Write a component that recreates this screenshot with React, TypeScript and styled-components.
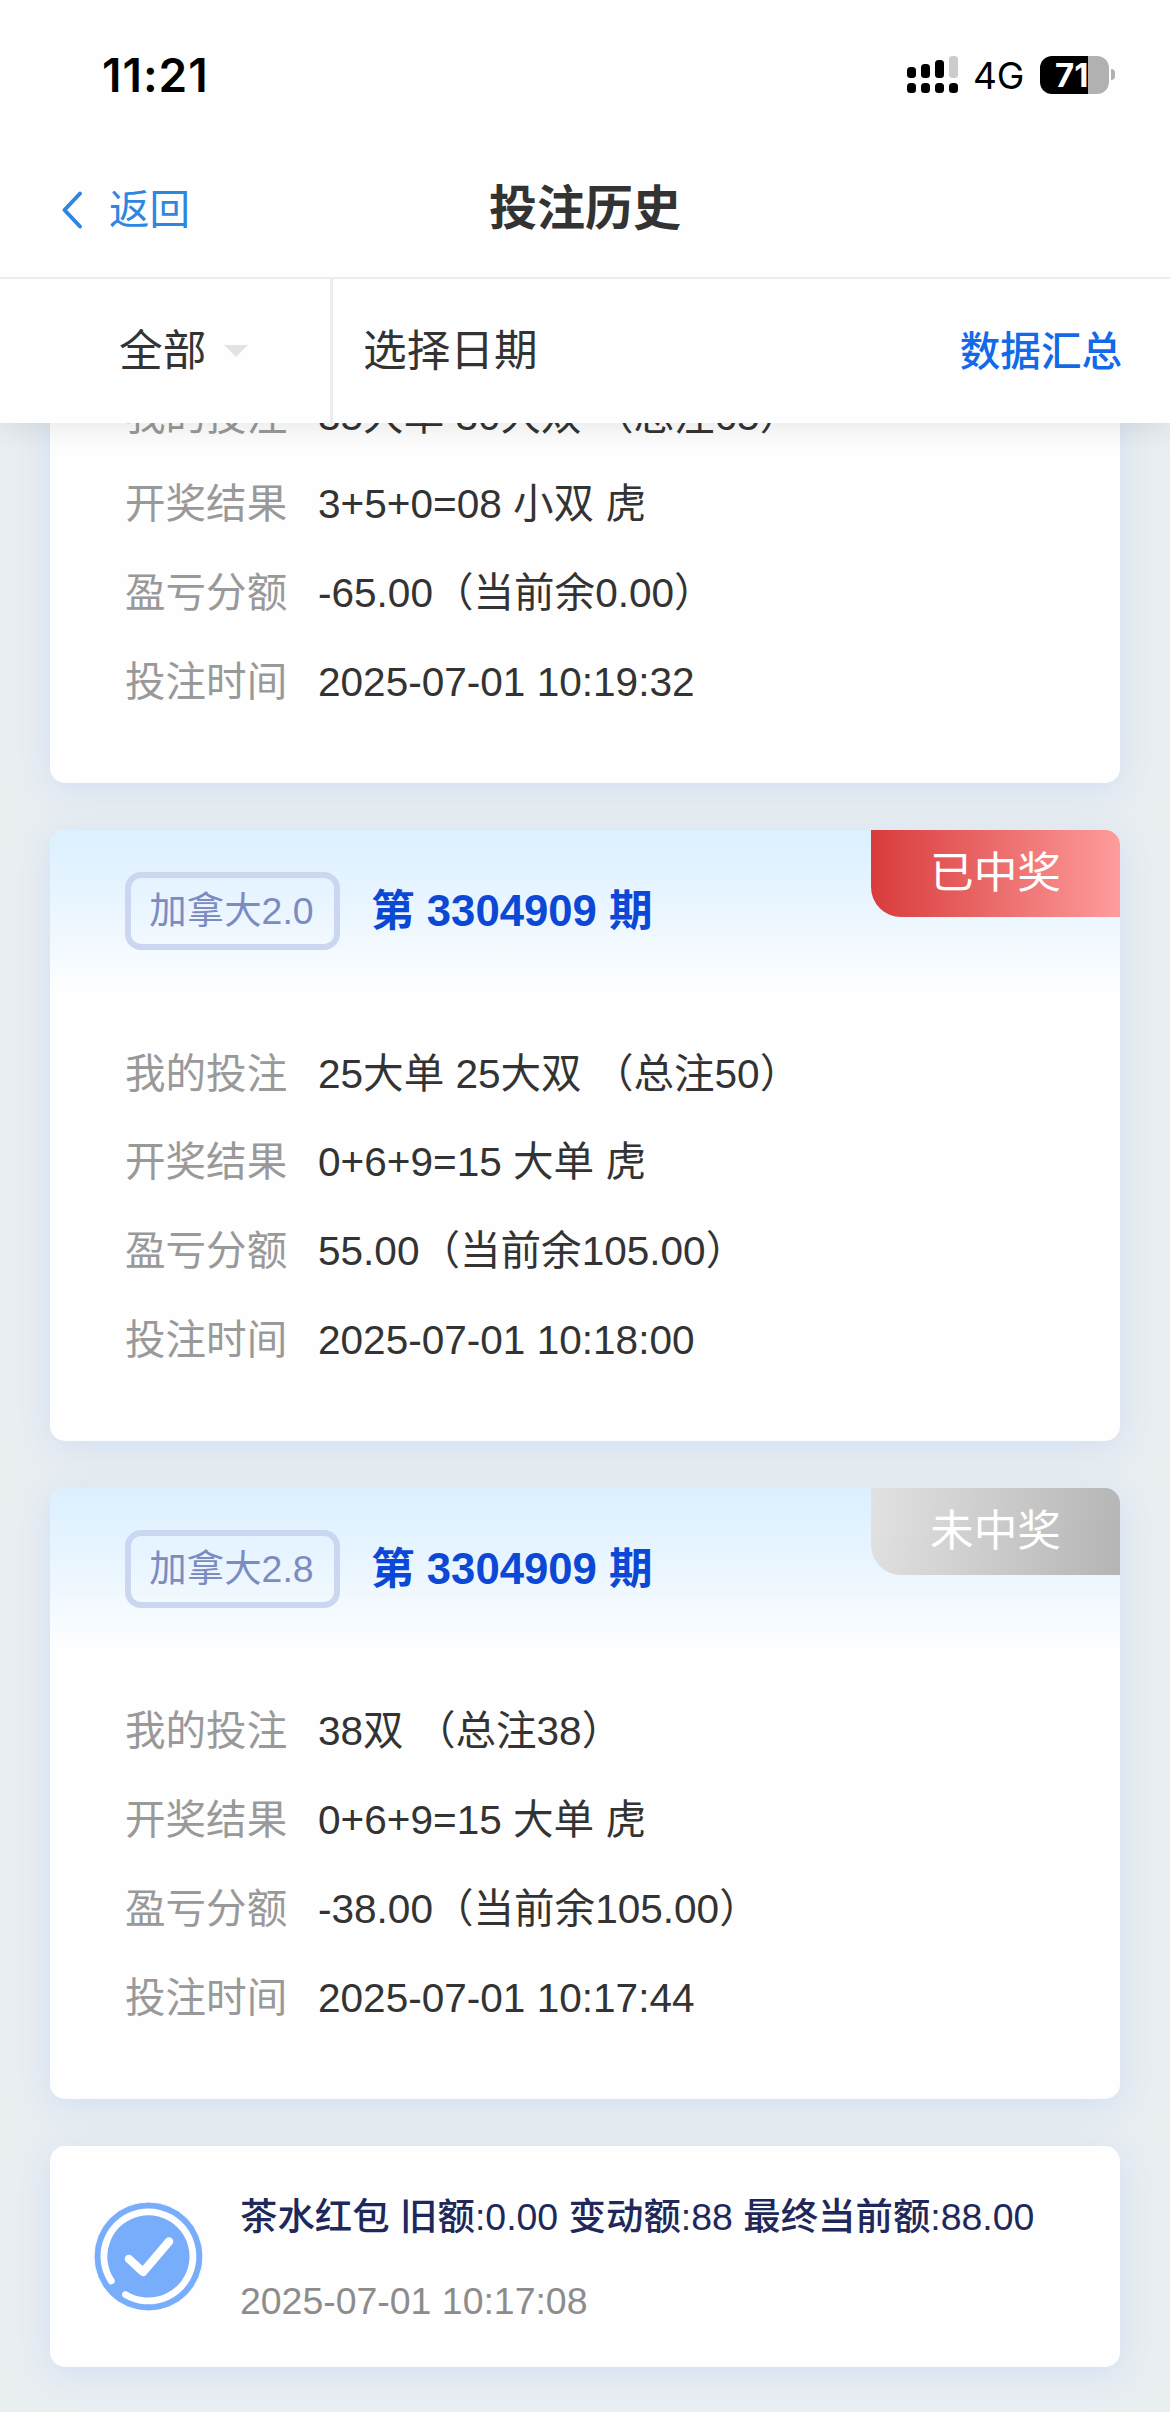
import React from "react";
import styled, { createGlobalStyle, css } from "styled-components";

const Global = createGlobalStyle`
  * { box-sizing: border-box; }
  body {
    margin: 0;
    background: #e9eef1;
    color: #333;
    font-family: "Liberation Sans", "Noto Sans CJK SC", sans-serif;
    font-kerning: none;
  }
`;

const Screen = styled.div`
  width: 1170px;
  height: 2412px;
  display: flex;
  flex-direction: column;
  overflow: hidden;
`;

const Top = styled.header`
  flex: none;
  height: 423px;
  position: relative;
  z-index: 2;
  background: #fefefe;
  box-shadow: 0 3px 30px rgba(0, 0, 0, 0.1);
`;

const StatusBar = styled.div`
  height: 140px;
  display: flex;
  align-items: center;
  padding: 9px 55px 0 102px;
  font-family: Inter, "Noto Sans", sans-serif;
  color: #000;
`;

const Clock = styled.div`
  flex: 1;
  font-size: 46px;
  line-height: 56px;
  font-weight: 600;
  letter-spacing: 1px;
`;

const Network = styled.div`
  margin: 2px 17px 0 15px;
  width: 50px;
  font-size: 37px;
  line-height: 44px;
  letter-spacing: -0.2px;
`;

const Battery = styled.div`
  width: 69px;
  height: 38px;
  border-radius: 12px;
  display: flex;
  align-items: center;
  padding-left: 15px;
  background: linear-gradient(90deg, #000 48px, #b1b1b1 48px);
  color: #fff;
  font-size: 33px;
  font-weight: 700;
  letter-spacing: 0;
`;

const BatteryTip = styled.div`
  width: 4px;
  height: 11px;
  margin-left: 2px;
  border-radius: 0 5px 5px 0;
  background: #b1b1b1;
`;

const NavBar = styled.div`
  height: 139px;
  display: grid;
  grid-template-columns: 1fr auto 1fr;
  align-items: center;
  padding: 0 60px;
  border-bottom: 2px solid #ececec;
`;

const Back = styled.div`
  display: flex;
  align-items: center;
  gap: 26px;
  color: #2f86e0;
  font-size: 40.56px;
  line-height: 60px;
  padding-top: 3px;
`;

const Title = styled.h1`
  margin: 0;
  font-size: 48px;
  line-height: 70px;
  font-weight: 700;
`;

const Filters = styled.div`
  height: 144px;
  display: flex;
  align-items: stretch;
  font-size: 43.68px;
  line-height: 50px;
`;

const TypeFilter = styled.div`
  width: 333px;
  display: flex;
  align-items: center;
  padding-left: 119px;
  gap: 18px;
  border-right: 3px solid #ececec;
`;

const Caret = styled.i`
  border: 12px solid transparent;
  border-top-color: #e2e3e7;
  border-bottom: 0;
`;

const DateFilter = styled.div`
  flex: 1;
  display: flex;
  align-items: center;
  padding-left: 30px;
`;

const Summary = styled.div`
  display: flex;
  align-items: center;
  padding: 2px 48px 0 0;
  font-size: 40.56px;
  font-weight: 500;
  color: #126ae8;
`;

const List = styled.main`
  flex: 1;
  min-height: 0;
  display: flex;
  flex-direction: column;
  justify-content: flex-end;
  gap: 47px;
  padding: 0 50px 45px;
`;

const cardSurface = css`
  flex: none;
  background: #fefefe;
  border-radius: 15px;
  box-shadow: 0 6px 34px rgba(203, 219, 243, 0.8);
`;

const Card = styled.article`
  ${cardSurface}
  padding-bottom: 56.4px;
`;

const CardHead = styled.div`
  height: 162px;
  display: flex;
  align-items: flex-start;
  padding-left: 75px;
  border-radius: 15px 15px 0 0;
  background: linear-gradient(180deg, #dbf0ff, #ebf6ff 52%, #fefefe);
  overflow: hidden;
`;

const Game = styled.span`
  margin-top: 42px;
  height: 78px;
  width: 215px;
  padding-right: 2px;
  display: flex;
  align-items: center;
  justify-content: center;
  border: 6px solid #cbd7f0;
  border-radius: 16px;
  color: #7c8bc0;
  font-size: 37.44px;
  line-height: 44px;
`;

const Issue = styled.strong`
  flex: 1;
  margin: 42px 0 0 31px;
  line-height: 78px;
  font-size: 43.68px;
  color: #0b48d5;
`;

const Result = styled.span<{ $won: boolean }>`
  width: 249px;
  height: 87px;
  line-height: 86px;
  text-align: center;
  border-radius: 0 0 0 30px;
  color: #fff;
  font-size: 43.68px;
  background: ${(p) =>
    p.$won
      ? "linear-gradient(90deg, #d93b3b, #fe9c9c)"
      : "linear-gradient(100deg, #e2e2e2, #b4b4b4)"};
`;

const Rows = styled.dl`
  margin: 0;
  padding: 37px 0 0 75px;
`;

const Row = styled.div`
  height: 88.9px;
  display: flex;
  align-items: center;
  font-size: 40.56px;
  line-height: 46px;
  white-space: pre;
`;

const Label = styled.dt`
  width: 193px;
  color: #999;
`;

const Value = styled.dd`
  margin: 0;
`;

const Notice = styled.article`
  ${cardSurface}
  height: 221px;
  display: flex;
  align-items: center;
  padding-left: 44px;
  gap: 37px;
`;

const NoticeText = styled.div`
  margin-top: 4px;
  font-size: 37.44px;
  font-weight: 500;
  line-height: 56px;
  color: #20285a;
  white-space: nowrap;
`;

const NoticeTime = styled.div`
  margin-top: 28px;
  font-size: 37.44px;
  line-height: 56px;
  color: #8c8c8c;
`;

const Signal = () => (
  <svg width="51" height="37" viewBox="0 0 51 37">
    <rect x="0" y="11" width="9" height="11" rx="3.5" />
    <rect x="14" y="8" width="9" height="14" rx="3.5" />
    <rect x="28" y="4" width="9" height="18" rx="3.5" />
    <rect x="42" y="0" width="9" height="22" rx="3.5" fill="#ccc" />
    {[0, 14, 28, 42].map((x) => (
      <rect key={x} x={x} y="27" width="9" height="10" rx="3.5" />
    ))}
  </svg>
);

const Chevron = () => (
  <svg width="23" height="40" viewBox="0 0 23 40" fill="none" stroke="#2f86e0" strokeWidth="4" strokeLinecap="round" strokeLinejoin="round">
    <path d="M20 3.5 4.5 20 20 36.5" />
  </svg>
);

const CheckBadge = () => (
  <svg width="109" height="109" viewBox="0 0 109 109" fill="none" stroke="#fefefe" strokeLinecap="round" strokeLinejoin="round">
    <circle cx="54.5" cy="54.5" r="54.5" fill="#78adfb" />
    <path d="M17.3 79 A44.5 44.5 0 1 1 31.5 92.6" strokeWidth="6.8" />
    <path d="M35 57 49 70 75 39.5" strokeWidth="8.5" />
  </svg>
);

type Bet = {
  head?: { game: string; issue: string; won: boolean };
  rows: [string, string][];
};

const bets: Bet[] = [
  {
    rows: [
      ["我的投注", "35大单 30大双 （总注65）"],
      ["开奖结果", "3+5+0=08 小双 虎"],
      ["盈亏分额", "-65.00（当前余0.00）"],
      ["投注时间", "2025-07-01 10:19:32"],
    ],
  },
  {
    head: { game: "加拿大2.0", issue: "3304909", won: true },
    rows: [
      ["我的投注", "25大单 25大双 （总注50）"],
      ["开奖结果", "0+6+9=15 大单 虎"],
      ["盈亏分额", "55.00（当前余105.00）"],
      ["投注时间", "2025-07-01 10:18:00"],
    ],
  },
  {
    head: { game: "加拿大2.8", issue: "3304909", won: false },
    rows: [
      ["我的投注", "38双 （总注38）"],
      ["开奖结果", "0+6+9=15 大单 虎"],
      ["盈亏分额", "-38.00（当前余105.00）"],
      ["投注时间", "2025-07-01 10:17:44"],
    ],
  },
];

const BetCard = ({ bet: { head, rows } }: { bet: Bet }) => (
  <Card>
    {head && (
      <CardHead>
        <Game>{head.game}</Game>
        <Issue>第 {head.issue} 期</Issue>
        <Result $won={head.won}>{head.won ? "已中奖" : "未中奖"}</Result>
      </CardHead>
    )}
    <Rows>
      {rows.map(([label, value]) => (
        <Row key={label}>
          <Label>{label}</Label>
          <Value>{value}</Value>
        </Row>
      ))}
    </Rows>
  </Card>
);

export default function App() {
  return (
    <Screen>
      <Global />
      <Top>
        <StatusBar>
          <Clock>11:21</Clock>
          <Signal />
          <Network>4G</Network>
          <Battery>71</Battery>
          <BatteryTip />
        </StatusBar>
        <NavBar>
          <Back>
            <Chevron />
            返回
          </Back>
          <Title>投注历史</Title>
        </NavBar>
        <Filters>
          <TypeFilter>
            全部
            <Caret />
          </TypeFilter>
          <DateFilter>选择日期</DateFilter>
          <Summary>数据汇总</Summary>
        </Filters>
      </Top>
      <List>
        {bets.map((bet, i) => (
          <BetCard key={i} bet={bet} />
        ))}
        <Notice>
          <CheckBadge />
          <div>
            <NoticeText>茶水红包 旧额:0.00 变动额:88 最终当前额:88.00</NoticeText>
            <NoticeTime>2025-07-01 10:17:08</NoticeTime>
          </div>
        </Notice>
      </List>
    </Screen>
  );
}
